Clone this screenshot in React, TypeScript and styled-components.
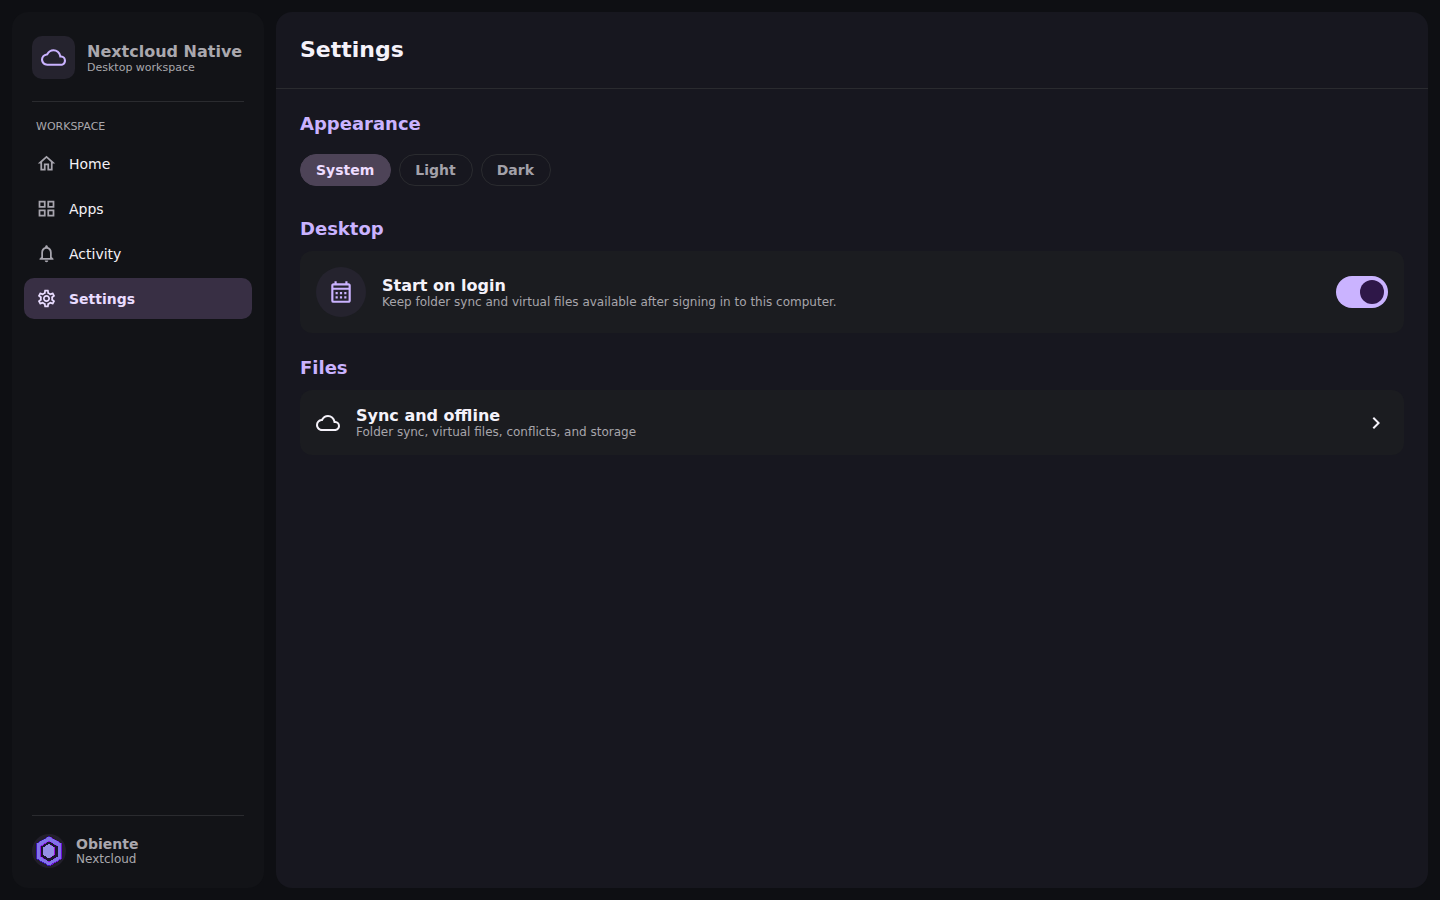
import React, { useState } from "react";
import styled, { createGlobalStyle, css } from "styled-components";
import {
  MdOutlineCloud,
  MdOutlineHome,
  MdOutlineGridView,
  MdNotificationsNone,
  MdOutlineSettings,
  MdOutlineCalendarMonth,
  MdChevronRight,
} from "react-icons/md";

const GlobalStyle = createGlobalStyle`
  *, *::before, *::after { box-sizing: border-box; }
  body {
    margin: 0;
    background: #0e0f13;
    color: #f5f2fa;
    font-family: "DejaVu Sans", sans-serif;
    font-size: 14px;
  }
  h1, h2, h3, p { margin: 0; }
  button { font: inherit; color: inherit; background: none; border: 0; cursor: pointer; }
`;

const Shell = styled.div`
  display: flex;
  gap: 12px;
  min-height: 100vh;
  padding: 12px;
`;

const Sidebar = styled.aside`
  display: flex;
  flex-direction: column;
  flex: 0 0 252px;
  padding: 24px 12px 20px;
  border-radius: 16px;
  background: #121317;
`;

const Brand = styled.header`
  display: flex;
  align-items: center;
  gap: 12px;
  margin: 0 8px;
  padding-bottom: 22px;
  border-bottom: 1px solid #2a2b2f;
`;

const BrandMark = styled.div`
  display: grid;
  place-items: center;
  width: 43px;
  height: 43px;
  border-radius: 10px;
  background: #25232e;
  color: #cab3ff;
`;

const BrandText = styled.div`
  padding-top: 2px;
`;

const BrandName = styled.p`
  color: #aaa8ae;
  font-size: 16px;
  font-weight: 700;
  line-height: 18px;
  white-space: nowrap;
`;

const BrandNote = styled.p`
  color: #a9a8ad;
  font-size: 11px;
  line-height: 13px;
`;

const NavLabel = styled.h2`
  margin: 18px 12px 10px;
  color: #a9a8ad;
  font-size: 11px;
  font-weight: 400;
  line-height: 13px;
`;

const Nav = styled.nav`
  display: flex;
  flex-direction: column;
  gap: 4px;
`;

const NavLink = styled.a<{ $active?: boolean }>`
  display: flex;
  align-items: center;
  gap: 12px;
  height: 41px;
  padding: 0 12px;
  border-radius: 10px;
  color: #f3f1f6;
  font-size: 14px;
  text-decoration: none;

  svg { color: #a7a5ae; }

  ${({ $active }) =>
    $active &&
    css`
      background: #382f44;
      color: #e9dcff;
      font-weight: 700;
      svg { color: #e9dcff; }
    `}
`;

const Account = styled.footer`
  display: flex;
  align-items: center;
  gap: 10px;
  margin: auto 8px 0;
  padding-top: 18px;
  border-top: 1px solid #2a2b2f;
`;

const AccountName = styled.p`
  color: #aaa8ae;
  font-size: 14px;
  font-weight: 700;
  line-height: 16px;
`;

const AccountNote = styled.p`
  color: #a9a8ad;
  font-size: 12px;
  line-height: 14px;
`;

const Main = styled.main`
  flex: 1;
  min-width: 0;
  border-radius: 16px;
  background: #17171f;
`;

const PageHeader = styled.header`
  padding: 24px 24px 25px;
  border-bottom: 1px solid #2a2b2f;
`;

const PageTitle = styled.h1`
  font-size: 22px;
  font-weight: 700;
  line-height: 27px;
`;

const Content = styled.div`
  display: flex;
  flex-direction: column;
  padding: 24px;
  gap: 24px;
`;

const SectionTitle = styled.h2`
  margin-bottom: 12px;
  color: #cab3ff;
  font-size: 18px;
  font-weight: 700;
  line-height: 21px;
`;

const ChipRow = styled.div`
  display: flex;
  gap: 8px;
  padding: 8px 0;
`;

const Chip = styled.button<{ $selected: boolean }>`
  height: 32px;
  padding: 0 16px 0 15px;
  border: 1px solid ${({ $selected }) => ($selected ? "#4d4357" : "#2a2b2f")};
  border-radius: 16px;
  background: ${({ $selected }) => ($selected ? "#4d4357" : "transparent")};
  color: ${({ $selected }) => ($selected ? "#eedcff" : "#a3a1a9")};
  font-size: 14px;
  font-weight: 700;
`;

const cardStyle = css`
  display: flex;
  align-items: center;
  gap: 16px;
  width: 100%;
  padding: 16px;
  border-radius: 12px;
  background: #1b1c20;
  text-align: left;
`;

const SettingCard = styled.label`
  ${cardStyle}
  cursor: pointer;
`;

const LinkCard = styled.a`
  ${cardStyle}
  color: #f5f2fa;
  text-decoration: none;
`;

const IconDisc = styled.span`
  display: grid;
  place-items: center;
  width: 50px;
  height: 50px;
  border-radius: 50%;
  background: #25232e;
  color: #cab3ff;
`;

const CardText = styled.span`
  display: flex;
  flex: 1;
  flex-direction: column;
`;

const CardTitle = styled.span`
  font-size: 16px;
  font-weight: 700;
  line-height: 19px;
`;

const CardNote = styled.span`
  color: #a7a5ab;
  font-size: 12px;
  line-height: 14px;
`;

const Switch = styled.input`
  appearance: none;
  display: flex;
  align-items: center;
  width: 52px;
  height: 32px;
  margin: 0;
  padding: 4px;
  border-radius: 16px;
  background: #3a3842;
  cursor: pointer;

  &::before {
    content: "";
    width: 24px;
    height: 24px;
    border-radius: 50%;
    background: #a09fa8;
  }

  &:checked {
    justify-content: flex-end;
    background: #cab3ff;
  }

  &:checked::before { background: #2e1748; }
`;

const navItems = [
  { label: "Home", Icon: MdOutlineHome },
  { label: "Apps", Icon: MdOutlineGridView },
  { label: "Activity", Icon: MdNotificationsNone },
  { label: "Settings", Icon: MdOutlineSettings },
];

const themes = ["System", "Light", "Dark"];

function AccountLogo() {
  return (
    <svg width="34" height="34" viewBox="0 0 34 34" shapeRendering="crispEdges" aria-hidden="true">
      <circle cx="17" cy="17" r="17" fill="#221f2b" shapeRendering="auto" />
      <path d="M17 2L30 9.500V25L17 32.500L4 25V9.500Z" fill="#3a12b8" />
      <path d="M18 2.500L30 9.500V25L18 32L17 28L26 23Z" fill="#6a10d8" />
      <path d="M17 2.500L29 9.500V24.500L17 31.500L5 24.500V9.500Z" fill="#8273e8" />
      <path d="M17 7L26 12V22.500L17 28L8 22.500V12Z" fill="#8d10e8" />
      <path d="M17 7.500L26 12.500V22.500L17 27.500L9 22.500V12.500Z" fill="#1b1630" />
      <path d="M17 10L23 13.500V21L17 24.500L11 21V13.500Z" fill="#a010e8" />
      <path d="M17 10L22 13.500V21L17 24.500L11 21V13.500Z" fill="#9590e6" />
    </svg>
  );
}

export default function App() {
  const [theme, setTheme] = useState("System");
  const [startOnLogin, setStartOnLogin] = useState(true);

  return (
    <Shell>
      <GlobalStyle />
      <Sidebar>
        <Brand>
          <BrandMark>
            <MdOutlineCloud size={25} />
          </BrandMark>
          <BrandText>
            <BrandName>Nextcloud Native</BrandName>
            <BrandNote>Desktop workspace</BrandNote>
          </BrandText>
        </Brand>
        <NavLabel>WORKSPACE</NavLabel>
        <Nav aria-label="Workspace">
          {navItems.map(({ label, Icon }) => (
            <NavLink
              key={label}
              href={"#" + label.toLowerCase()}
              $active={label === "Settings"}
              aria-current={label === "Settings" ? "page" : undefined}
            >
              <Icon size={21} />
              {label}
            </NavLink>
          ))}
        </Nav>
        <Account>
          <AccountLogo />
          <div>
            <AccountName>Obiente</AccountName>
            <AccountNote>Nextcloud</AccountNote>
          </div>
        </Account>
      </Sidebar>
      <Main>
        <PageHeader>
          <PageTitle>Settings</PageTitle>
        </PageHeader>
        <Content>
          <section>
            <SectionTitle>Appearance</SectionTitle>
            <ChipRow>
              {themes.map((name) => (
                <Chip
                  key={name}
                  type="button"
                  $selected={name === theme}
                  aria-pressed={name === theme}
                  onClick={() => setTheme(name)}
                >
                  {name}
                </Chip>
              ))}
            </ChipRow>
          </section>
          <section>
            <SectionTitle>Desktop</SectionTitle>
            <SettingCard>
              <IconDisc>
                <MdOutlineCalendarMonth size={26} />
              </IconDisc>
              <CardText>
                <CardTitle>Start on login</CardTitle>
                <CardNote>
                  Keep folder sync and virtual files available after signing in to this computer.
                </CardNote>
              </CardText>
              <Switch
                type="checkbox"
                role="switch"
                checked={startOnLogin}
                onChange={(event) => setStartOnLogin(event.target.checked)}
              />
            </SettingCard>
          </section>
          <section>
            <SectionTitle>Files</SectionTitle>
            <LinkCard href="#sync">
              <MdOutlineCloud size={24} />
              <CardText>
                <CardTitle>Sync and offline</CardTitle>
                <CardNote>Folder sync, virtual files, conflicts, and storage</CardNote>
              </CardText>
              <MdChevronRight size={24} />
            </LinkCard>
          </section>
        </Content>
      </Main>
    </Shell>
  );
}
